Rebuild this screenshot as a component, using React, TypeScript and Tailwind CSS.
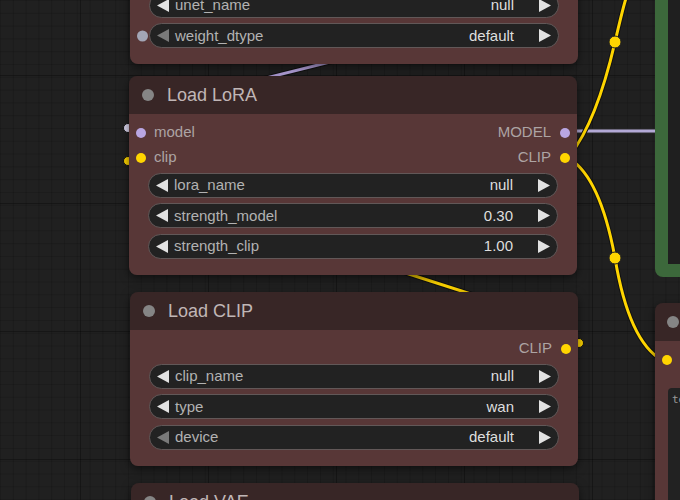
import React from "react";

type Slot = { label: string; color: string };
type Widget = { label: string; value: string; dimLeft?: boolean; inputDot?: boolean };

const YELLOW = "#ffd500";
const LAVENDER = "#b9a6e2";

function Arrow({ dir, dim }: { dir: "left" | "right"; dim?: boolean }) {
  return (
    <svg width="12" height="13" viewBox="0 0 12 13" className="shrink-0">
      <polygon
        points={dir === "left" ? "12,0 12,13 0,6.5" : "0,0 0,13 12,6.5"}
        fill={dim ? "#7a7a7a" : "#e2e2e2"}
      />
    </svg>
  );
}

function Dot({ color, size = 10 }: { color: string; size?: number }) {
  return (
    <span
      className="block shrink-0 rounded-full"
      style={{ width: size, height: size, background: color }}
    />
  );
}

function WidgetRow({ w }: { w: Widget }) {
  return (
    <div className="relative flex h-[30.5px] items-center px-[19px]">
      {w.inputDot && (
        <span className="absolute left-[7px] top-1/2 z-10 h-[11px] w-[11px] -translate-y-1/2 rounded-full bg-[#a3a6b6]" />
      )}
      <div className="flex h-[25px] w-full items-center rounded-full border border-[#625858] bg-[#222] px-[7px]">
        <Arrow dir="left" dim={w.dimLeft} />
        <span className="ml-[6px] text-[15px] text-[#b2b2b2]">{w.label}</span>
        <span className="ml-auto text-[15px] text-[#dedede]">{w.value}</span>
        <span className="ml-[25px] flex">
          <Arrow dir="right" />
        </span>
      </div>
    </div>
  );
}

function Node({
  title,
  inputs = [],
  outputs = [],
  widgets = [],
  className,
}: {
  title?: string;
  inputs?: Slot[];
  outputs?: Slot[];
  widgets?: Widget[];
  className: string;
}) {
  const rows = Math.max(inputs.length, outputs.length);
  return (
    <div
      className={`absolute w-[448px] rounded-[8px] shadow-[0_3px_10px_rgba(0,0,0,0.55)] font-['Liberation_Sans',Arial,sans-serif] ${className}`}
    >
      {title && (
        <div className="flex h-[38px] items-center rounded-t-[8px] bg-[#382626] pl-[13px]">
          <span className="block h-[12px] w-[12px] rounded-full bg-[#858585]" />
          <span className="ml-[13px] text-[18px] text-[#c0b6b6]">{title}</span>
        </div>
      )}
      <div
        className={`bg-[#583737] pt-[6px] pb-[13px] ${title ? "rounded-b-[8px]" : "rounded-[8px]"}`}
      >
        {Array.from({ length: rows }).map((_, i) => (
          <div key={i} className="flex h-[25px] items-center justify-between px-[7px]">
            <div className="flex items-center gap-[8px]">
              {inputs[i] && (
                <>
                  <Dot color={inputs[i].color} />
                  <span className="text-[15px] text-[#ada4a4]">{inputs[i].label}</span>
                </>
              )}
            </div>
            <div className="flex items-center gap-[9px]">
              {outputs[i] && (
                <>
                  <span className="text-[15px] text-[#ada4a4]">{outputs[i].label}</span>
                  <Dot color={outputs[i].color} />
                </>
              )}
            </div>
          </div>
        ))}
        {widgets.map((w) => (
          <WidgetRow key={w.label} w={w} />
        ))}
      </div>
    </div>
  );
}

function Links() {
  return (
    <svg className="absolute inset-0" width="680" height="500">
      {/* link tails that run behind the nodes */}
      <path d="M230,87 L370,52" stroke="#111" strokeWidth="5" strokeLinecap="round" />
      <path d="M230,87 L370,52" stroke={LAVENDER} strokeWidth="3" />
      <path d="M350,255 L530,313" stroke="#111" strokeWidth="5" />
      <path d="M350,255 L530,313" stroke={YELLOW} strokeWidth="3" />

      <path d="M565,131 L656,131" stroke="#2a2a2a" strokeWidth="5" />
      <path d="M565,131 L656,131" stroke="#b3a9d6" strokeWidth="3" />

      <path
        d="M570,155 C590,130 605,85 615,42 S624,5 628,-8"
        fill="none"
        stroke="#111"
        strokeWidth="5"
      />
      <path
        d="M570,155 C590,130 605,85 615,42 S624,5 628,-8"
        fill="none"
        stroke={YELLOW}
        strokeWidth="3"
      />
      <path
        d="M570,159 C595,175 608,220 615,258 C622,300 635,345 662,360"
        fill="none"
        stroke="#111"
        strokeWidth="5"
      />
      <path
        d="M570,159 C595,175 608,220 615,258 C622,300 635,345 662,360"
        fill="none"
        stroke={YELLOW}
        strokeWidth="3"
      />
      <circle cx="615" cy="42" r="6" fill={YELLOW} stroke="#222" strokeWidth="1" />
      <circle cx="615" cy="258" r="6" fill={YELLOW} stroke="#222" strokeWidth="1" />

      <circle cx="128" cy="128" r="4.5" fill="#ddd8f0" stroke="#111" strokeWidth="1" />
      <circle cx="128" cy="161" r="4.5" fill={YELLOW} stroke="#111" strokeWidth="1" />
      <circle cx="579" cy="343" r="4.5" fill={YELLOW} stroke="#111" strokeWidth="1" />
    </svg>
  );
}

export default function App() {
  return (
    <div className="relative h-[500px] w-[680px] overflow-hidden bg-[#202020] bg-[linear-gradient(rgba(0,0,0,0.3)_1px,transparent_1px),linear-gradient(90deg,rgba(0,0,0,0.3)_1px,transparent_1px),linear-gradient(rgba(0,0,0,0.14)_1px,transparent_1px),linear-gradient(90deg,rgba(0,0,0,0.14)_1px,transparent_1px)] bg-size-[128px_128px,128px_128px,12.8px_12.8px,12.8px_12.8px] bg-position-[80px_75px,80px_75px,0_0,0_0]">
      <Links />

      {/* green group on the right */}
      <div className="absolute left-[655px] top-[-20px] h-[297px] w-[60px] rounded-[8px] border-[13px] border-[#3c683b] bg-[#1f1f1f]" />

      <Node
        className="left-[130px] top-[-16px]"
        widgets={[
          { label: "unet_name", value: "null" },
          { label: "weight_dtype", value: "default", dimLeft: true, inputDot: true },
        ]}
      />

      <Node
        className="left-[129px] top-[76px]"
        title="Load LoRA"
        inputs={[
          { label: "model", color: LAVENDER },
          { label: "clip", color: YELLOW },
        ]}
        outputs={[
          { label: "MODEL", color: LAVENDER },
          { label: "CLIP", color: YELLOW },
        ]}
        widgets={[
          { label: "lora_name", value: "null" },
          { label: "strength_model", value: "0.30" },
          { label: "strength_clip", value: "1.00" },
        ]}
      />

      <Node
        className="left-[130px] top-[292px]"
        title="Load CLIP"
        outputs={[{ label: "CLIP", color: YELLOW }]}
        widgets={[
          { label: "clip_name", value: "null" },
          { label: "type", value: "wan" },
          { label: "device", value: "default", dimLeft: true },
        ]}
      />

      <Node className="left-[131px] top-[483px]" title="Load VAE" />

      {/* node inside the right column */}
      <div className="absolute left-[655px] top-[303px] w-[200px] rounded-[8px] shadow-[0_3px_10px_rgba(0,0,0,0.55)] font-['Liberation_Sans',Arial,sans-serif]">
        <div className="flex h-[38px] items-center rounded-t-[8px] bg-[#382626] pl-[12px]">
          <span className="block h-[12px] w-[12px] rounded-full bg-[#858585]" />
        </div>
        <div className="h-[200px] rounded-b-[8px] bg-[#583737] pt-[6px]">
          <div className="flex h-[25px] items-center pl-[7px]">
            <Dot color={YELLOW} />
          </div>
          <div className="ml-[13px] mt-[16px] h-[120px] rounded-[4px] bg-[#222] px-[4px] pt-[4px] font-['DejaVu_Sans_Mono',monospace] text-[11px] text-[#9a9a9a]">
            te
          </div>
        </div>
      </div>
    </div>
  );
}
